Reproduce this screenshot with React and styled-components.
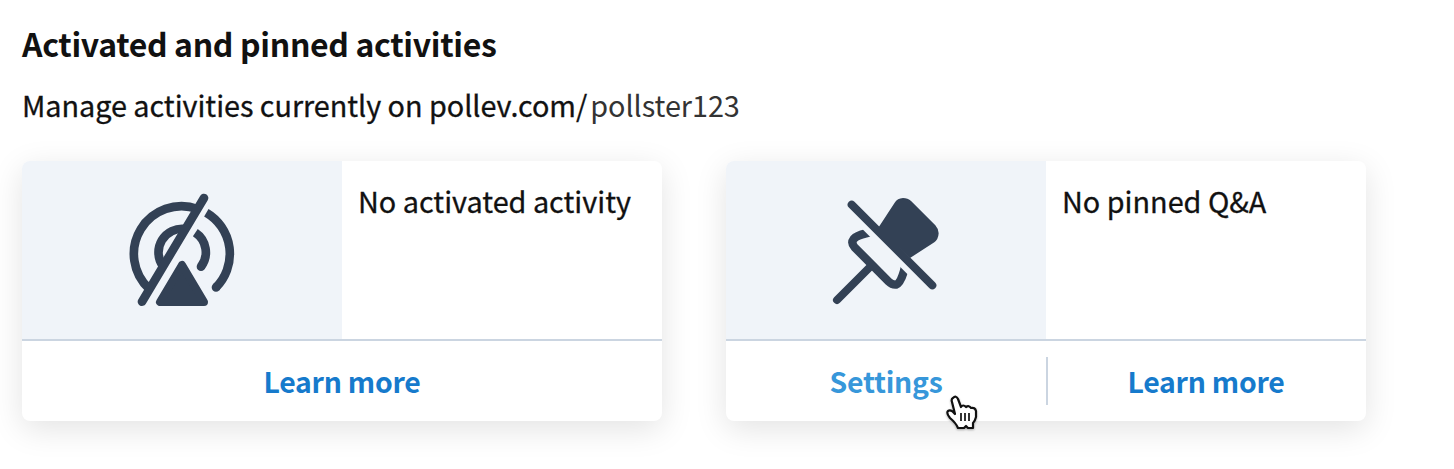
import React from "react";
import styled, { createGlobalStyle } from "styled-components";

const GlobalStyle = createGlobalStyle`
  body {
    margin: 0;
    background: #fff;
    color: #111;
    font-family: "Noto Sans CJK SC", "Noto Sans", sans-serif;
  }
`;

const Page = styled.main`
  box-sizing: border-box;
  min-height: 469px;
  padding: 20px 22px;
`;

const Title = styled.h1`
  margin: 0;
  font-size: 32px;
  line-height: 46px;
  font-weight: 700;
  letter-spacing: -0.34px;
`;

const Subtitle = styled.p`
  margin: 17px 0 35px;
  font-size: 28.8px;
  line-height: 43px;
  letter-spacing: -0.04px;
  -webkit-text-stroke: 0.3px;
`;

const Username = styled.span`
  margin-left: 3px;
  color: #333;
  -webkit-text-stroke: 0;
`;

const Cards = styled.div`
  display: flex;
  gap: 64px;
`;

const StyledCard = styled.section`
  width: 640px;
  height: 260px;
  display: flex;
  flex-direction: column;
  border-radius: 8px;
  background: #fff;
  box-shadow: 0 8px 32px rgba(0, 0, 0, 0.115);
`;

const CardBody = styled.div`
  display: flex;
  height: 178px;
  border-bottom: 2px solid #cbd5e1;
`;

const IconPanel = styled.div`
  width: 320px;
  display: flex;
  align-items: center;
  justify-content: center;
  border-top-left-radius: 8px;
  background: #f0f4f9;
  color: #334155;
`;

const Message = styled.p`
  margin: 18px 0 0 16px;
  font-size: 28.8px;
  line-height: 43px;
  -webkit-text-stroke: 0.3px;
`;

const CardFooter = styled.div`
  flex: 1;
  display: flex;
  align-items: center;
`;

const Divider = styled.span`
  width: 2px;
  height: 48px;
  margin-right: -2px;
  background: #cbd5e1;
`;

const Action = styled.a`
  flex: 1;
  position: relative;
  text-align: center;
  font-size: 28.4px;
  line-height: 42px;
  font-weight: 700;
  letter-spacing: -0.25px;
  color: ${props => (props.$hovered ? "#3797da" : "#167acc")};
`;

const Pointer = styled.svg`
  position: absolute;
  left: 220px;
  top: 35px;
  filter: drop-shadow(0 1px 1px rgba(0, 0, 0, 0.3));
`;

const ActivityOffIcon = () => (
  <svg width="140" height="140" viewBox="6 0 420 420" fill="none" stroke="currentColor" strokeWidth="26">
    <path d="M118 327A143 143 0 0 1 263 87" />
    <path d="M159 259A71 71 0 0 1 226 147" />
    <path d="M289 98A143 143 0 0 1 318 322" />
    <path d="M256 158A71 71 0 0 1 273 260" />
    <path d="M282 54L96 365M318 322h.1M273 260h.1" strokeLinecap="round" />
    <path
      d="M216 255L150 366H282Z"
      fill="currentColor"
      strokeWidth="24"
      strokeLinejoin="round"
    />
  </svg>
);

const PinOffIcon = () => (
  <svg width="140" height="140" viewBox="3 0 420 420" fill="none" stroke="currentColor" strokeWidth="25">
    <clipPath id="below-slash">
      <path d="M0 5L415 420H0Z" />
    </clipPath>
    <path
      d="M190 143L239 68Q247 55 264 54Q278 54 289 64L361 136Q371 147 371 160Q370 178 358 187L285 234Z"
      fill="currentColor"
      stroke="none"
    />
    <path
      d="M170 156L153 160Q125 166 116 177Q107 189 119 202L221 305Q231 315 243 314Q256 310 267 273L270 258"
      clipPath="url(#below-slash)"
    />
    <path d="M110 74L352 316M66 360L162 264" strokeWidth="24" strokeLinecap="round" />
  </svg>
);

const HandPointer = () => (
  <Pointer width="32" height="36" viewBox="0 0 32 36" fill="#fff" stroke="#111" strokeWidth="2.2" strokeLinejoin="round">
    <path d="M7 3Q10 0 12 4L15 12Q17 9 20 12Q23 10 25 13Q29 12 30 16V22Q29 26 27 28V33H22L20 31L18 33H12Q10 28 4 23Q0 18 2 16Q5 14 9 19L6 7Q5 4 7 3Z" />
    <path d="M15 18v8M19 18v8M23 18v8" strokeWidth="1.7" />
  </Pointer>
);

const App = () => (
  <>
    <GlobalStyle />
    <Page>
      <Title>Activated and pinned activities</Title>
      <Subtitle>
        Manage activities currently on pollev.com/<Username>pollster123</Username>
      </Subtitle>
      <Cards>
        <StyledCard>
          <CardBody>
            <IconPanel>
              <ActivityOffIcon />
            </IconPanel>
            <Message>No activated activity</Message>
          </CardBody>
          <CardFooter>
            <Action>Learn more</Action>
          </CardFooter>
        </StyledCard>
        <StyledCard>
          <CardBody>
            <IconPanel>
              <PinOffIcon />
            </IconPanel>
            <Message>No pinned Q&amp;A</Message>
          </CardBody>
          <CardFooter>
            <Action $hovered>
              Settings
              <HandPointer />
            </Action>
            <Divider />
            <Action>Learn more</Action>
          </CardFooter>
        </StyledCard>
      </Cards>
    </Page>
  </>
);

export default App;
